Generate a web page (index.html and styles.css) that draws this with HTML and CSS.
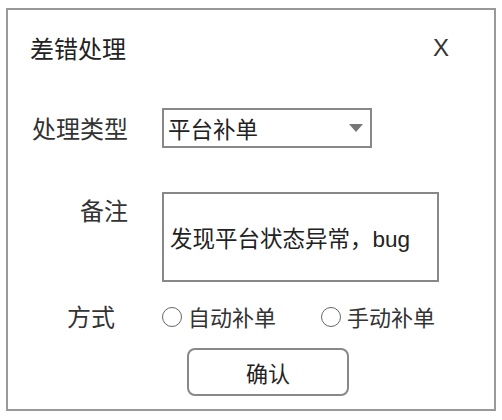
FILE: index.html
```html
<!DOCTYPE html>
<html lang="zh-CN">
<head>
  <meta charset="UTF-8">
  <title>差错处理</title>
  <link rel="stylesheet" href="styles.css">
</head>
<body>
  <div class="dialog">
    <!-- 标题 -->
    <div class="dialog-head">
      <span class="title">差错处理</span>
      <span class="close">X</span>
    </div>

    <!-- 处理类型 -->
    <div class="row">
      <span class="label">处理类型</span>
      <div class="select">
        <span>平台补单</span>
        <span class="arrow"></span>
      </div>
    </div>

    <!-- 备注 -->
    <div class="row row-top">
      <span class="label">备注</span>
      <div class="note">发现平台状态异常，bug</div>
    </div>

    <!-- 方式 -->
    <div class="row row-radio">
      <span class="label label-short">方式</span>
      <div class="radios">
        <label class="radio"><span class="dot"></span>自动补单</label>
        <label class="radio"><span class="dot"></span>手动补单</label>
      </div>
    </div>

    <button class="confirm">确认</button>
  </div>
</body>
</html>
```

FILE: styles.css
```css
body {
  margin: 0;
  background: #fff;
  color: #222;
  font-family: "Noto Sans CJK SC", "Liberation Sans", sans-serif;
}

.dialog {
  margin: 8px 0 0 6px;
  width: 490px;
  height: 403px;
  box-sizing: border-box;
  border: 2px solid #999;
}

.dialog-head {
  display: flex;
  justify-content: space-between;
  align-items: center;
  padding: 22px 45px 0 22px;
  font-size: 24px;
  line-height: 32px;
}

.close {
  font-family: "Liberation Sans", sans-serif;
  font-size: 24px;
  color: #333;
}

.row {
  display: flex;
  align-items: center;
  margin-top: 44px;
}
.row-top {
  align-items: flex-start;
}
.row-radio {
  margin-top: 18px;
}

.label {
  width: 120px;
  padding-right: 34px;
  text-align: right;
  font-size: 24px;
  line-height: 32px;
  color: #333;
}
.row-top .label {
  margin-top: 2px;
}
.label-short {
  width: 107px;
  padding-right: 47px;
}

/* 下拉框 */
.select {
  display: flex;
  justify-content: space-between;
  align-items: center;
  width: 210px;
  height: 40px;
  box-sizing: border-box;
  border: 2px solid #888;
  padding: 0 7px 0 4px;
  font-size: 22.5px;
}
.arrow {
  width: 0;
  height: 0;
  border-left: 7px solid transparent;
  border-right: 7px solid transparent;
  border-top: 8px solid #777;
}

/* 备注框 */
.note {
  display: flex;
  align-items: center;
  width: 277px;
  height: 90px;
  box-sizing: border-box;
  border: 2px solid #888;
  padding-left: 6px;
  font-family: "Liberation Sans", "Noto Sans CJK SC", sans-serif;
  font-size: 22.5px;
}

/* 单选 */
.radios {
  display: flex;
  gap: 45px;
  font-size: 22px;
  line-height: 32px;
  color: #333;
}
.radio {
  display: flex;
  align-items: center;
}
.dot {
  width: 20px;
  height: 20px;
  box-sizing: border-box;
  border: 1.5px solid #666;
  border-radius: 50%;
  margin: 2px 6px 0 0;
}

.confirm {
  display: block;
  margin: 16px 0 0 179px;
  width: 162px;
  height: 48px;
  border: 2px solid #888;
  border-radius: 8px;
  background: #fff;
  color: #222;
  font-family: "Noto Sans CJK SC", sans-serif;
  font-size: 22px;
  padding: 0;
}
```
